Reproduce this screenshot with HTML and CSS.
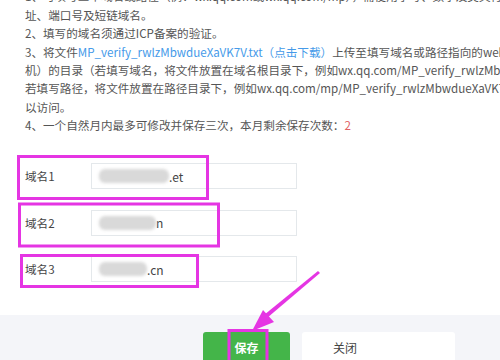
FILE: index.html
```html
<!DOCTYPE html>
<html lang="zh-CN">
<head>
    <meta charset="UTF-8">
    <title>设置JS接口安全域名</title>
    <link rel="stylesheet" href="styles.css">
</head>
<body>
    <div class="dialog">
        <div class="tips">
            <p>1、可填写三个域名或路径（例：wx.qq.com或wx.qq.com/mp），需使用字母、数字及英文符号，不支持IP地</p>
            <p>址、端口号及短链域名。</p>
            <p>2、填写的域名须通过ICP备案的验证。</p>
            <p>3、将文件<a class="link">MP_verify_rwlzMbwdueXaVK7V.txt（点击下载）</a>上传至填写域名或路径指向的web服务器（或虚拟主</p>
            <p>机）的目录（若填写域名，将文件放置在域名根目录下，例如wx.qq.com/MP_verify_rwlzMbwdueXaVK7V.txt；</p>
            <p>若填写路径，将文件放置在路径目录下，例如wx.qq.com/mp/MP_verify_rwlzMbwdueXaVK7V.txt），并确保可</p>
            <p>以访问。</p>
            <p>4、一个自然月内最多可修改并保存三次，本月剩余保存次数：<span class="count">2</span></p>
        </div>

        <div class="form">
            <div class="form-row">
                <label>域名1</label>
                <div class="input"><span class="blur blur-1"></span>.et</div>
            </div>
            <div class="form-row">
                <label>域名2</label>
                <div class="input"><span class="blur blur-2"></span>n</div>
            </div>
            <div class="form-row">
                <label>域名3</label>
                <div class="input"><span class="blur blur-3"></span>.cn</div>
            </div>
        </div>

        <div class="footer">
            <button class="btn btn-save">保存</button>
            <button class="btn btn-close">关闭</button>
        </div>
    </div>

    <svg class="marks" width="500" height="360" viewBox="0 0 500 360">
        <g fill="none" stroke="#e535e3" stroke-width="3">
            <rect x="18.5" y="156.5" width="189" height="42"/>
            <rect x="19.5" y="204" width="199" height="42"/>
            <rect x="21.5" y="255.5" width="176" height="31"/>
            <rect x="229" y="330.5" width="38" height="32"/>
        </g>
        <polygon fill="#e535e3" points="318,271 320,273 267,318 264,315"/>
        <polygon fill="#e535e3" points="252,331 263,310 274,322"/>
    </svg>
</body>
</html>
```

FILE: styles.css
```css
:root {
    --text-color: #555555;
    --link-color: #459ae9;
    --green: #44b549;
    --border-color: #e4e8eb;
    --footer-bg: #f4f5f9;
}

body {
    margin: 0;
    width: 500px;
    height: 360px;
    overflow: hidden;
    position: relative;
    background: #ffffff;
    font-family: "Noto Sans CJK SC", "Noto Sans", sans-serif;
    font-size: 11.6px;
    color: var(--text-color);
}

.tips {
    margin-top: -12.6px;
    padding-left: 25px;
    line-height: 18.4px;
}

.tips p {
    margin: 0;
    white-space: nowrap;
}

.link {
    color: var(--link-color);
}

.count {
    color: #e15f63;
}

.form {
    margin-top: 28.6px;
    display: flex;
    flex-direction: column;
    gap: 20.5px;
}

.form-row {
    display: flex;
    align-items: center;
}

.form-row label {
    width: 66px;
    padding-left: 25px;
    color: #444444;
}

.input {
    width: 204px;
    height: 24px;
    border: 1px solid var(--border-color);
    display: flex;
    align-items: center;
    padding-left: 7px;
    box-sizing: border-box;
    width: 206px;
    height: 26px;
    color: #444444;
    font-size: 12px;
}

.blur {
    display: inline-block;
    height: 14px;
    background: #d9d9d9;
    border-radius: 6px;
    filter: blur(1.5px);
}

.blur-1 { width: 70px; }
.blur-2 { width: 57px; }
.blur-3 { width: 48px; }

.footer {
    margin-top: 33px;
    background: var(--footer-bg);
    height: 45px;
    padding-top: 17px;
    padding-left: 203px;
    box-sizing: border-box;
    display: flex;
    gap: 12px;
}

.btn {
    height: 30px;
    border: none;
    border-radius: 3px;
    font-family: inherit;
    font-size: 12px;
    padding: 0;
}

.btn-save {
    width: 87px;
    background: var(--green);
    color: #ffffff;
    font-weight: bold;
}

.btn-close {
    width: 153px;
    background: #ffffff;
    color: #444444;
    text-align: left;
    padding-left: 31px;
}

.marks {
    position: absolute;
    left: 0;
    top: 0;
    pointer-events: none;
}
```
